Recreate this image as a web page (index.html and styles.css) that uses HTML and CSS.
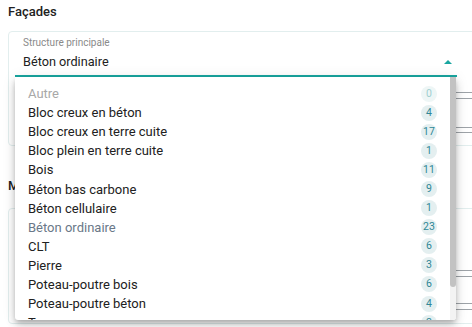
FILE: index.html
```html
<!DOCTYPE html>
<html>
<head>
  <meta charset='UTF-8'>
  <title>Façades</title>
  <link rel="stylesheet" href="styles.css">
</head>
<body>
  <div class='page'>
    <h3 class='section-title'>Façades</h3>

    <!-- Facades card -->
    <div class='card card-first'>
      <div class='select-field'>
        <span class='select-label'>Structure principale</span>
        <div class='select-value'>
          <span>Béton ordinaire</span>
          <span class='select-arrow'></span>
        </div>
      </div>
      <div class='line-pair lines-a'></div>
      <div class='line-pair lines-b'></div>
    </div>

    <h3 class='section-title title-second'>Menuiseries</h3>

    <div class='card card-second'>
      <div class='line-pair lines-c'></div>
      <div class='line-pair lines-d'></div>
    </div>

    <!-- Open dropdown -->
    <div class='menu'>
      <ul class='menu-list'>
        <li class='menu-item disabled'><span>Autre</span><span class='badge'>0</span></li>
        <li class='menu-item'><span>Bloc creux en béton</span><span class='badge'>4</span></li>
        <li class='menu-item'><span>Bloc creux en terre cuite</span><span class='badge'>17</span></li>
        <li class='menu-item'><span>Bloc plein en terre cuite</span><span class='badge'>1</span></li>
        <li class='menu-item'><span>Bois</span><span class='badge'>11</span></li>
        <li class='menu-item'><span>Béton bas carbone</span><span class='badge'>9</span></li>
        <li class='menu-item'><span>Béton cellulaire</span><span class='badge'>1</span></li>
        <li class='menu-item selected'><span>Béton ordinaire</span><span class='badge'>23</span></li>
        <li class='menu-item'><span>CLT</span><span class='badge'>6</span></li>
        <li class='menu-item'><span>Pierre</span><span class='badge'>3</span></li>
        <li class='menu-item'><span>Poteau-poutre bois</span><span class='badge'>6</span></li>
        <li class='menu-item'><span>Poteau-poutre béton</span><span class='badge'>4</span></li>
        <li class='menu-item'><span>Terre crue</span><span class='badge'>2</span></li>
      </ul>
      <div class='scrollbar'><div class='scroll-thumb'></div></div>
    </div>
  </div>
</body>
</html>
```

FILE: styles.css
```css
* { margin: 0; padding: 0; box-sizing: border-box; }
html, body { width: 472px; height: 327px; overflow: hidden; }
body { font-family: Roboto, "Liberation Sans", Arial, sans-serif; background: #fff; color: #212121; }
.page { position: relative; padding: 0 0 0 8px; width: 700px; }
.section-title { font-size: 13px; font-weight: 500; line-height: 16px; color: #212121; padding-top: 4px; height: 31px; }
.title-second { padding-top: 32px; height: 62px; }
.card { border: 1px solid #e2eeee; border-radius: 4px; width: 620px; position: relative; }
.card-first { height: 115px; padding: 0 0 0 6px; }
.card-second { height: 116px; }
.select-field { width: 442px; height: 45px; padding: 5px 0 0 8px; border-bottom: 2px solid #19a6a0; background: #fff; }
.select-label { display: block; font-size: 10px; line-height: 12px; color: #8a8a8a; }
.select-value { display: flex; justify-content: space-between; align-items: center; font-size: 12.7px; line-height: 16px; margin-top: 5px; padding-right: 5px; }
.select-arrow { width: 0; height: 0; border-left: 4px solid transparent; border-right: 4px solid transparent; border-bottom: 4px solid #19a6a0; }
.line-pair { height: 7px; border-top: 1px solid #9ea3a8; border-bottom: 1px solid #9ea3a8; margin-left: 420px; width: 200px; }
.lines-a { margin-top: 15px; }
.lines-b { margin-top: 28px; height: 6px; }
.lines-c { margin-top: 61px; }
.lines-d { margin-top: 26px; }
.menu { position: absolute; left: 15px; top: 77px; width: 441px; height: 243px; background: #fff; display: flex; border-radius: 0 0 3px 3px; box-shadow: 0 3px 5px -1px rgba(0,0,0,0.2), 0 6px 10px 0 rgba(0,0,0,0.14), 0 1px 14px 0 rgba(0,0,0,0.1); overflow: hidden; }
.menu-list { list-style: none; flex: 1; padding: 7px 0 0 0; overflow: hidden; }
.menu-item { display: flex; justify-content: space-between; align-items: center; height: 19.1px; padding: 0 13px 0 13px; font-size: 13px; color: #212121; }
.menu-item.disabled { color: #a8a8a8; }
.menu-item.selected { color: #6a7888; }
.badge { width: 16px; height: 16px; border-radius: 50%; background: #e4eff0; color: #2f8796; font-size: 10.5px; line-height: 16px; text-align: center; }
.disabled .badge { background: #eef6f6; color: #9fcfd0; }
.scrollbar { width: 6px; background: #f3f3f3; }
.scroll-thumb { height: 210px; background: #c2c2c2; border-radius: 0 0 3px 3px; }
```
